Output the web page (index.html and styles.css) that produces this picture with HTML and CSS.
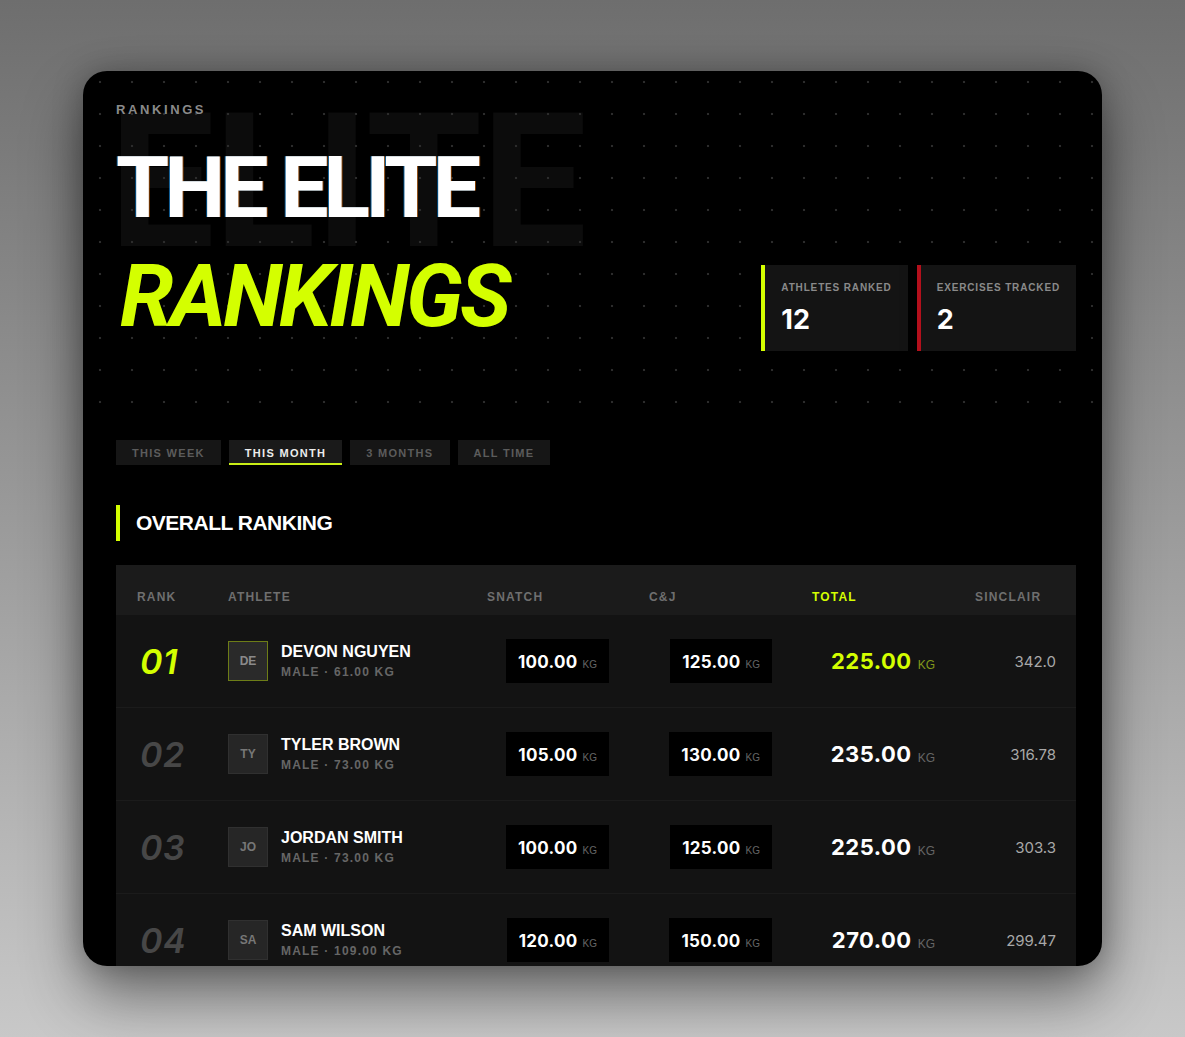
FILE: index.html
```html
<!DOCTYPE html>
<html lang="en">
<head>
<meta charset="utf-8">
<title>The Elite Rankings</title>
<link rel="stylesheet" href="styles.css">
</head>
<body>
<main class="card">
  <header class="hero">
    <div class="ghost" aria-hidden="true">ELITE</div>
    <div class="hero-left">
      <div class="eyebrow">RANKINGS</div>
      <h1 class="title"><span class="t1">THE ELITE</span><span class="t2">RANKINGS</span></h1>
    </div>
    <div class="stats">
      <div class="stat stat-lime">
        <div class="stat-label">ATHLETES RANKED</div>
        <div class="stat-value">12</div>
      </div>
      <div class="stat stat-red">
        <div class="stat-label">EXERCISES TRACKED</div>
        <div class="stat-value">2</div>
      </div>
    </div>
  </header>

  <section class="content">
    <nav class="tabs">
      <span class="tab">THIS WEEK</span>
      <span class="tab tab-active">THIS MONTH</span>
      <span class="tab">3 MONTHS</span>
      <span class="tab">ALL TIME</span>
    </nav>

    <h2 class="section-title">OVERALL RANKING</h2>

    <div class="table">
      <div class="row thead">
        <div class="th">RANK</div>
        <div class="th">ATHLETE</div>
        <div class="th">SNATCH</div>
        <div class="th">C&amp;J</div>
        <div class="th th-total">TOTAL</div>
        <div class="th">SINCLAIR</div>
      </div>

      <div class="row tr">
        <div class="rank rank-first">01</div>
        <div class="athlete">
          <div class="avatar avatar-first">DE</div>
          <div class="who"><div class="name">DEVON NGUYEN</div><div class="meta">MALE · 61.00 KG</div></div>
        </div>
        <div class="num"><span class="lift">100.00<small>KG</small></span></div>
        <div class="num"><span class="lift">125.00<small>KG</small></span></div>
        <div class="num"><span class="total total-first">225.00<small>KG</small></span></div>
        <div class="num sinclair">342.0</div>
      </div>

      <div class="row tr">
        <div class="rank">02</div>
        <div class="athlete">
          <div class="avatar">TY</div>
          <div class="who"><div class="name">TYLER BROWN</div><div class="meta">MALE · 73.00 KG</div></div>
        </div>
        <div class="num"><span class="lift">105.00<small>KG</small></span></div>
        <div class="num"><span class="lift">130.00<small>KG</small></span></div>
        <div class="num"><span class="total">235.00<small>KG</small></span></div>
        <div class="num sinclair">316.78</div>
      </div>

      <div class="row tr">
        <div class="rank">03</div>
        <div class="athlete">
          <div class="avatar">JO</div>
          <div class="who"><div class="name">JORDAN SMITH</div><div class="meta">MALE · 73.00 KG</div></div>
        </div>
        <div class="num"><span class="lift">100.00<small>KG</small></span></div>
        <div class="num"><span class="lift">125.00<small>KG</small></span></div>
        <div class="num"><span class="total">225.00<small>KG</small></span></div>
        <div class="num sinclair">303.3</div>
      </div>

      <div class="row tr">
        <div class="rank">04</div>
        <div class="athlete">
          <div class="avatar">SA</div>
          <div class="who"><div class="name">SAM WILSON</div><div class="meta">MALE · 109.00 KG</div></div>
        </div>
        <div class="num"><span class="lift">120.00<small>KG</small></span></div>
        <div class="num"><span class="lift">150.00<small>KG</small></span></div>
        <div class="num"><span class="total">270.00<small>KG</small></span></div>
        <div class="num sinclair">299.47</div>
      </div>
    </div>
  </section>
</main>
</body>
</html>
```

FILE: styles.css
```css
* { box-sizing: border-box; }

html, body { height: 100%; }

body {
  margin: 0;
  padding: 71px 83px;
  background: linear-gradient(to bottom, #6e6e6e 0%, #9a9a9a 50%, #c8c8c8 100%);
  font-family: "Liberation Sans", Arial, sans-serif;
  color: #fff;
  display: flex;
}

.card {
  width: 1019px;
  height: 895px;
  background: #000;
  border-radius: 24px;
  overflow: hidden;
  box-shadow: 0 30px 60px rgba(0, 0, 0, 0.45), 0 0 30px rgba(0, 0, 0, 0.25);
}

/* ---------- hero ---------- */
.hero {
  position: relative;
  height: 353px;
  padding: 31px 26px 0 33px;
  display: flex;
  justify-content: space-between;
  align-items: flex-start;
}

.hero::before {
  content: "";
  position: absolute;
  inset: 0;
  z-index: 1;
  background-image: radial-gradient(circle at 16px 16px, #2c2c2c 0, #2c2c2c 1px, transparent 1.6px);
  background-size: 32px 32px;
  background-position: 1px -5px;
}

.ghost {
  position: absolute;
  left: 26px;
  top: 17px;
  z-index: 0;
  font-family: "Roboto", "Liberation Sans", sans-serif;
  font-size: 188px;
  line-height: 1;
  font-weight: 700;
  letter-spacing: -1px;
  color: #0c0c0c;
  white-space: nowrap;
}

.hero-left, .stats { position: relative; z-index: 2; }

.hero-left { display: flex; flex-direction: column; }

.eyebrow {
  font-size: 13px;
  line-height: 16px;
  font-weight: 700;
  letter-spacing: 2.6px;
  color: #8a8a8a;
  margin-bottom: 15px;
}

.title {
  margin: 0;
  font-family: "Roboto", "Liberation Sans", sans-serif;
  font-size: 86px;
  line-height: 109px;
  font-weight: 700;
  letter-spacing: -0.057em;
}

.t1 {
  display: block;
  color: #fff;
  text-shadow: -1px 0 rgba(0, 150, 255, 0.55), 1px 0 rgba(255, 120, 0, 0.5);
}

.t2 {
  display: block;
  color: #d4ff00;
  font-style: italic;
  letter-spacing: -0.036em;
  padding-left: 4px;
}

.stats {
  display: flex;
  gap: 9px;
  margin-top: 163px;
}

.stat {
  background: #141414;
  padding: 17px 16px 16px 16px;
  border-left: 4px solid #d4ff00;
  box-shadow: 0 0 12px rgba(0, 0, 0, 0.6);
}

.stat-red { border-left-color: #b3101c; }

.stat-label {
  font-size: 10px;
  line-height: 12px;
  font-weight: 700;
  letter-spacing: 0.85px;
  color: #8a8a8a;
  margin-bottom: 11px;
  white-space: nowrap;
}

.stat-value {
  font-family: "Inter", "Liberation Sans", sans-serif;
  font-size: 27px;
  line-height: 30px;
  font-weight: 700;
  color: #fff;
}

/* ---------- content ---------- */
.content {
  padding: 16px 26px 0 33px;
}

.tabs {
  display: flex;
  gap: 8px;
}

.tab {
  height: 25px;
  padding: 0 16px;
  display: flex;
  align-items: center;
  background: #161616;
  font-size: 11px;
  font-weight: 700;
  letter-spacing: 1.3px;
  color: #5c5c5c;
}

.tab-active {
  background: #1a1a1a;
  color: #ececec;
  box-shadow: inset 0 -2px 0 #c9ee16;
}

.section-title {
  margin: 40px 0 24px 0;
  height: 36px;
  border-left: 4px solid #d4ff00;
  padding-left: 16px;
  font-size: 21px;
  line-height: 36px;
  font-weight: 700;
  letter-spacing: -0.5px;
  color: #fff;
}

/* ---------- table ---------- */
.table {
  width: 960px;
}

.row {
  display: grid;
  grid-template-columns: 92px 259px 162px 163px 163px 121px;
}

.thead {
  height: 50px;
  background: #1b1b1b;
  align-items: end;
  padding-bottom: 11px;
}

.th {
  padding: 0 20px;
  font-size: 12px;
  line-height: 14px;
  font-weight: 700;
  letter-spacing: 1.2px;
  color: #6f6f6f;
}

.th:first-child { padding-left: 21px; }

.th-total { color: #d4ff00; }

.tr {
  height: 93px;
  background: #131313;
  border-bottom: 1px solid #1b1b1b;
  align-items: center;
}

.tr:first-of-type { background: #151515; }

.rank {
  padding-left: 24px;
  font-family: "Inter", "Liberation Sans", sans-serif;
  font-size: 34px;
  font-weight: 600;
  font-style: italic;
  letter-spacing: 0.5px;
  color: #474747;
}

.rank-first { color: #d4ff00; }

.athlete {
  padding-left: 20px;
  display: flex;
  align-items: center;
  gap: 13px;
}

.avatar {
  width: 40px;
  height: 40px;
  flex: none;
  background: #262626;
  border: 1px solid #303030;
  display: flex;
  align-items: center;
  justify-content: center;
  font-size: 12px;
  font-weight: 700;
  color: #777;
}

.avatar-first {
  border-color: #6d7d17;
  background: #2a2a2a;
  color: #8a8a8a;
}

.who { display: flex; flex-direction: column; gap: 2px; }

.name {
  font-size: 16px;
  line-height: 20px;
  font-weight: 700;
  color: #fff;
  white-space: nowrap;
}

.meta {
  font-size: 12px;
  line-height: 16px;
  font-weight: 700;
  letter-spacing: 1.2px;
  color: #666;
  white-space: nowrap;
}

.num {
  padding-right: 20px;
  display: flex;
  justify-content: flex-end;
  font-family: "Inter", "Liberation Sans", sans-serif;
}

.lift {
  height: 44px;
  padding: 13px 12px 0 12px;
  background: #000;
  display: flex;
  align-items: baseline;
  font-size: 17px;
  line-height: 20px;
  font-weight: 700;
  letter-spacing: 0.3px;
  color: #fff;
}

.lift small {
  font-size: 10px;
  font-weight: 400;
  letter-spacing: 0;
  color: #666;
  margin-left: 5px;
  font-family: "Liberation Sans", sans-serif;
}

.total {
  display: flex;
  align-items: baseline;
  font-size: 22px;
  font-weight: 700;
  letter-spacing: 0.5px;
  color: #fff;
}

.total small {
  font-size: 12px;
  font-weight: 400;
  letter-spacing: 0;
  color: #666;
  margin-left: 6px;
  font-family: "Liberation Sans", sans-serif;
}

.total-first { color: #d4ff00; }
.total-first small { color: #82991a; }

.sinclair {
  font-size: 15px;
  font-weight: 400;
  color: #a8a8a8;
}
```
